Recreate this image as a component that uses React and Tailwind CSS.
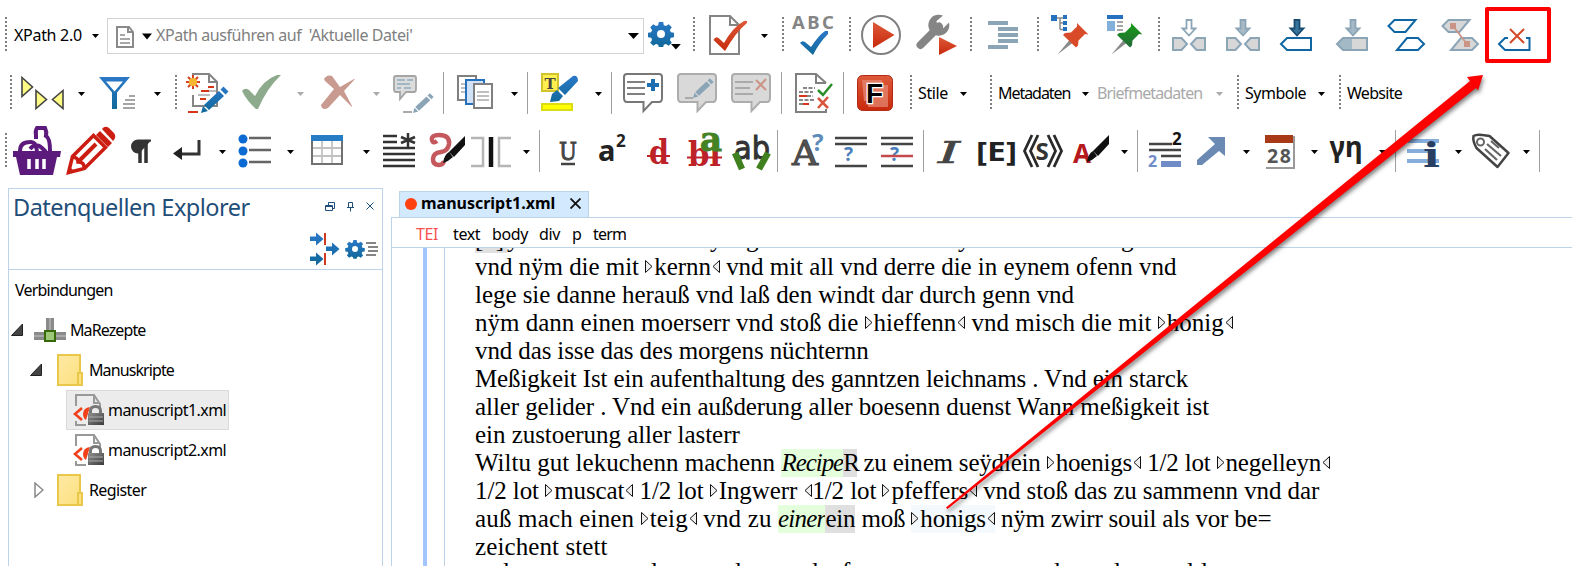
import React from 'react';

const Cell = ({ a, b, y, h, children }) => (
  <svg className="shrink-0 overflow-visible" width={b - a} height={h} viewBox={`${a} ${y} ${b - a} ${h}`} fill="none">
    {children}
  </svg>
);
const R1 = (p) => <Cell y={6} h={60} {...p} />;
const R2 = (p) => <Cell y={66} h={56} {...p} />;
const R3 = (p) => <Cell y={122} h={60} {...p} />;

const Grip = ({ x, y }) => <path d={`M${x} ${y}v34`} stroke="#7f7f7f" strokeWidth="2" strokeDasharray="2 2" />;
const Sep = ({ x, y }) => <path d={`M${x} ${y}v42`} stroke="#a0a0a0" strokeWidth="1" />;
const Caret = ({ x, y, c = '#000', s = 1 }) => <path d={`M${x} ${y}h${7 * s}l${-3.5 * s} ${4 * s}z`} fill={c} />;
const SANS = 'Noto Sans, Open Sans, sans-serif';

const Defs = () => (
  <svg width="0" height="0" className="absolute">
    <defs>
      <linearGradient id="blue" x1="0" y1="0" x2="0" y2="1"><stop offset="0" stopColor="#2b78c8" /><stop offset="1" stopColor="#10699a" /></linearGradient>
      <linearGradient id="red" x1="0" y1="0" x2="0" y2="1"><stop offset="0" stopColor="#dd5a3a" /><stop offset="1" stopColor="#c8290c" /></linearGradient>
      <linearGradient id="green" x1="0" y1="0" x2="0" y2="1"><stop offset="0" stopColor="#159a12" /><stop offset="1" stopColor="#256a3c" /></linearGradient>
      <linearGradient id="folder" x1="0" y1="0" x2="1" y2="1"><stop offset="0" stopColor="#ffeaa6" /><stop offset="1" stopColor="#fbdf7c" /></linearGradient>
      <linearGradient id="lock" x1="0" y1="0" x2="1" y2="1"><stop offset="0" stopColor="#909090" /><stop offset="1" stopColor="#3a3a3a" /></linearGradient>
    </defs>
  </svg>
);

const Gear = ({ cx, cy, r }) => (
  <g fill="url(#blue)">
    <path
      fillRule="evenodd"
      transform={`translate(${cx} ${cy}) scale(${r / 12})`}
      d="M-2.200-12h4.400l.6 3.200 2.200.9 2.700-1.900 3.100 3.100-1.900 2.700.9 2.200 3.200.6v4.400l-3.200.6-.9 2.200 1.900 2.700-3.100 3.100-2.700-1.900-2.200.9-.6 2.200h-4.400l-.6-2.200-2.200-.9-2.700 1.900-3.100-3.100 1.900-2.700-.9-2.200-3.200-.6v-4.400l3.200-.6.9-2.200-1.900-2.700 3.100-3.100 2.700 1.900 2.200-.9zM0-4a4 4 0 1 0 0 8 4 4 0 0 0 0-8z"
    />
  </g>
);

const Pin = ({ dx, fill }) => (
  <g transform={`translate(${dx} 0)`}>
    <path d="M1057.500 54.500l12-14.500 3 3z" fill="#8a8a8a" />
    <path d="M1077 23l11.500 11.500-3.500-.5-6.500 6.500-.5 5-2 2-13-12.500 2-2 6-.5 6-6z" fill={fill} />
  </g>
);

const DownArrow = ({ x, fill, stroke }) => (
  <path d={`M${x - 2.500} 20h5v8.500h4l-6.500 7-6.500-7h4z`} fill={fill} stroke={stroke} strokeWidth="1.800" />
);
const TagPair = ({ x, fill }) => (
  <g stroke="#8ba5b7" strokeWidth="2">
    <path d={`M${x - 16} 38h8.500l5.500 6-5.500 6h-8.500zM${x + 16} 38h-8.500l-5.500 6 5.500 6h8.500z`} fill="#d7d7d7" />
    <DownArrow x={x} fill={fill} stroke="#8ba5b7" />
  </g>
);

const Bubble = ({ x, fill, stroke, children }) => (
  <g>
    <path d={`M${x + 4} 74h32q3 0 3 3v21q0 4-3 4h-7l-8.500 9v-9h-16.500q-3 0-3-4v-21q0-3 3-3z`} fill={fill} stroke={stroke} strokeWidth="2" />
    {children}
  </g>
);

const Pencil = ({ x, y, s = 1, c = 'url(#blue)' }) => (
  <g transform={`translate(${x} ${y}) scale(${s})`} fill={c}>
    <path d="M0 0l2-7 5 5zM3-8L18-22l5 5L8-3zM19.500-23.500l3-3 5 5-3 3z" />
  </g>
);

const Brush = ({ x, y }) => (
  <g transform={`translate(${x} ${y})`} fill="#111">
    <path d="M0 0q1-8 6-11l4 5q-4 4-10 6zM6-11L22-27v9L11-6z" />
  </g>
);

function ToolbarOne() {
  return (
    <div className="flex h-[60px] items-center">
      <R1 a={0} b={14}><Grip x={6} y={17} /></R1>
      <div className="-mt-[2px] w-[76px] shrink-0 whitespace-nowrap text-[16px] tracking-[-0.3px]">XPath 2.0</div>
      <R1 a={90} b={107}><Caret x={92} y={34} /></R1>
      <div className="flex h-[36px] w-[537px] shrink-0 items-center border border-[#d2d2d2]">
        <svg width="48" height="34" viewBox="108 18 48 34" fill="none">
          <path d="M117 26h12l4 5v15h-16zM128 26v5h5" stroke="#8a8a8a" strokeWidth="2" />
          <path d="M120 34h5M120 38h10M120 42h10" stroke="#8a8a8a" strokeWidth="1.500" />
          <path d="M142 32.500h10l-5 6z" fill="#000" />
        </svg>
        <span className="-mt-[2px] grow whitespace-pre text-[16px] tracking-[-0.43px] text-[#808080]">XPath ausführen auf  'Aktuelle Datei'</span>
        <svg width="16" height="34" viewBox="627 18 16 34"><path d="M628 32h11l-5.500 6z" /></svg>
      </div>
      <R1 a={644} b={708}><Gear cx={661} cy={34} r={12} /><Caret x={671} y={44} s={1.4} /><Grip x={694} y={17} /></R1>
      <R1 a={708} b={756}>
        <path d="M710 16h20l9 9v29h-29zM730 16v9h9" stroke="#858585" strokeWidth="2" />
        <path d="M713.500 40q2-4 5-2l5.500 5q9-16 20-22 4-1 3 2-11 9-22 28z" fill="url(#red)" />
      </R1>
      <R1 a={756} b={788}><Caret x={761} y={34} /><Grip x={783} y={17} /></R1>
      <R1 a={788} b={856}>
        <text x="792" y="29" fontFamily={SANS} fontWeight="700" fontSize="18.500" textLength="42" fill="#858585">ABC</text>
        <path d="M800 43q2-3 5-1l6 5q8-12 14-16h3v3q-9 9-15 21z" fill="url(#blue)" />
        <Grip x={850} y={17} />
      </R1>
      <R1 a={856} b={908}>
        <circle cx="881" cy="35" r="19" stroke="#808080" strokeWidth="2" />
        <path d="M873 22l21.500 13-21.500 13z" fill="url(#red)" />
      </R1>
      <R1 a={908} b={980}>
        <path d="M920.500 45L939 26.500" stroke="#858585" strokeWidth="8" strokeLinecap="round" />
        <path d="M943 15.500a10.500 10.500 0 1 0 6 7l-5.500 5.500-6-1.500-1-5.500z" fill="#858585" />
        <path d="M939 37l18 9-18 9z" fill="url(#red)" />
        <Grip x={971} y={17} />
      </R1>
      <R1 a={980} b={1044}>
        <path d="M988 23h20M998 29h20M998 35h20M998 41h20M988 47h20" stroke="#8ba5b7" strokeWidth="4" />
        <Grip x={1038} y={17} />
      </R1>
      <R1 a={1044} b={1100}>
        <path d="M1051 15h6v6h-6zM1063 15h4v4h-4zM1063 21h4v4h-4zM1063 27h4v4h-4z" fill="#2571bd" />
        <path d="M1057 18h6M1060 18v11.500M1060 23h3M1060 29.500h3" stroke="#8a8a8a" strokeWidth="1.500" />
        <Pin dx={0} fill="#d84a28" />
      </R1>
      <R1 a={1100} b={1166}>
        <path d="M1107 15h16v4h-16z" fill="#2571bd" />
        <path d="M1107 21h8v10h-8z" fill="#82b0da" />
        <path d="M1117 22h6M1117 26h6M1117 30h6" stroke="#888" strokeWidth="1.500" />
        <Pin dx={54} fill="url(#green)" />
        <Grip x={1159} y={17} />
      </R1>
      <R1 a={1166} b={1216}><TagPair x={1189} fill="#fff" /></R1>
      <R1 a={1216} b={1270}><TagPair x={1243} fill="#a9bac6" /></R1>
      <R1 a={1270} b={1324}>
        <path d="M1281 44l6-6h24v12h-24z" stroke="#0f66a3" strokeWidth="2" />
        <DownArrow x={1297} fill="#36749b" stroke="#1a4b70" />
      </R1>
      <R1 a={1324} b={1378}>
        <path d="M1337 44l6-6h24v12h-24z" fill="#d7d7d7" />
        <path d="M1337 44l6-6h9v12h-9z" fill="#a3b9c6" />
        <path d="M1337 44l6-6h24v12h-24z" stroke="#8ba5b7" strokeWidth="2" />
        <DownArrow x={1353} fill="#a3b9c6" stroke="#8ba5b7" />
      </R1>
      <R1 a={1378} b={1432}>
        <path d="M1388.500 26l6-6h21l-10 12h-11zM1424 44l-6-6h-11l-10 12h21z" stroke="#0f66a3" strokeWidth="2" />
      </R1>
      <R1 a={1432} b={1485}>
        <path d="M1442.500 26l6-6h21l-10 12h-11zM1478 44l-6-6h-11l-10 12h21z" fill="#d7d7d7" stroke="#8ba5b7" strokeWidth="2" />
        <path d="M1450 23h6v6h-6zM1464 41h6v6h-6z" fill="#cb9486" />
        <path d="M1453 26l14 18" stroke="#cb9486" strokeWidth="1.800" />
      </R1>
      <div className="-mt-[2px] flex h-[56px] w-[66px] shrink-0 items-center justify-center rounded-[2px] border-4 border-[#fe0000]">
        <svg width="58" height="48" viewBox="1489 11 58 48" fill="none">
          <path d="M1508 38h-3l-6 6 6 6h24.500v-12h-3.500" stroke="#0f66a3" strokeWidth="2" />
          <path d="M1510 29l14 14M1524 29l-14 14" stroke="#d54828" strokeWidth="2" />
        </svg>
      </div>
    </div>
  );
}

const Label = ({ className, children }) => (
  <div className={'-mt-[2px] shrink-0 whitespace-nowrap text-[16px] leading-[22px] ' + className}>{children}</div>
);

function ToolbarTwo() {
  return (
    <div className="flex h-[56px] items-center">
      <R2 a={0} b={74}>
        <Grip x={11} y={75} />
        <path d="M22 77.500l10.500 9.500-10.500 9.500zM36 90.500l10.500 9-10.500 9zM63 90.500l-10.500 9 10.500 9z" fill="#fdfb84" stroke="#444" strokeWidth="1.600" />
      </R2>
      <R2 a={74} b={94}><Caret x={78} y={92} /></R2>
      <R2 a={94} b={180}>
        <path fillRule="evenodd" d="M99 77h31l-13 15.500V109h-5V92.500zM106 81.500l8.500 10 8.500-10z" fill="url(#blue)" />
        <path d="M129 96h6M125 100h10M123 104h12M123 108h12" stroke="#888" strokeWidth="1.500" />
        <Caret x={154} y={92} />
        <Grip x={176} y={75} />
      </R2>
      <R2 a={180} b={236}>
        <path d="M193 86V74h16l8 8v24h-24v-11M209 74v8h8" stroke="#858585" strokeWidth="2" />
        <path d="M201 91h8M208 87h6M200 99h6M188 112h10" stroke="#d33516" strokeWidth="2" />
        <path d="M209 91h7M198 95h12" stroke="#bbb" strokeWidth="2" />
        <path d="M193 75v14M186 82h14M188 77l10 10M198 77l-10 10" stroke="#d8401e" strokeWidth="2" />
        <circle cx="193" cy="82" r="4" fill="#f9b731" />
        <Pencil x={201} y={113} />
      </R2>
      <R2 a={236} b={312}>
        <path d="M242 91q3-4 7-1l6 6q8-16 22-21h4q-14 13-23 34h-2q-9-8-14-18z" fill="#8eaa8c" />
        <Caret x={297} y={92} c="#aaa" />
      </R2>
      <R2 a={312} b={386}>
        <path d="M324 79q3-5 8-3l8 11 14-8h1l-11 12 8 15v1l-12-12-12 13q-6 3-7-3l13-16-9-8z" fill="#c99a90" />
        <Caret x={373} y={92} c="#aaa" />
      </R2>
      <R2 a={386} b={448}>
        <path d="M396 76h18q2 0 2 2v11q0 3-2 3h-8l-6 7v-7h-4q-2 0-2-3v-11q0-2 2-2z" fill="#dcdcdc" stroke="#a5a5a5" strokeWidth="1.800" />
        <path d="M397 80h8M407 80h6M397 84h13M397 88h4M404 88h7" stroke="#8eaabd" strokeWidth="1.500" />
        <path d="M403 112h9" stroke="#aaa" strokeWidth="2" />
        <Pencil x={413} y={113} s={0.75} c="#8ba5b7" />
        <Sep x={443.5} y={72} />
      </R2>
      <R2 a={448} b={532}>
        <path d="M458 76h18v24h-18z" fill="#fff" stroke="#808080" strokeWidth="2" />
        <path d="M466 80h18v24h-18z" fill="#cfe2f7" stroke="#2571bd" strokeWidth="2" />
        <path d="M474 84h18v24h-18z" fill="#fff" stroke="#808080" strokeWidth="2" />
        <path d="M461 84h4M461 88h4M461 92h4M477 92h12M477 96h12M477 100h12" stroke="#aaa" strokeWidth="1.500" />
        <Caret x={511} y={92} />
        <Sep x={527.5} y={72} />
      </R2>
      <R2 a={532} b={616}>
        <path d="M542 74h16v17h-16z" fill="#fff04f" stroke="#d2c22e" strokeWidth="2" />
        <text x="544.500" y="88.500" fontFamily="DejaVu Serif, serif" fontWeight="700" fontSize="15" fill="#444">T</text>
        <path d="M550 102l2-8 5-4 6 6-4 5zM558 88l15-12q5-1 5 5l-13 14z" fill="url(#blue)" />
        <path d="M542 104h30v6h-30z" fill="#ffff00" stroke="#dcdc15" strokeWidth="2" />
        <Caret x={595} y={92} />
        <Sep x={611.5} y={72} />
      </R2>
      <R2 a={616} b={670}>
        <Bubble x={623} fill="#fff" stroke="#777">
          <path d="M627 82h18M627 88h18M627 94h18" stroke="#808080" strokeWidth="2" />
          <path d="M651 79h4v4h4v4h-4v4h-4v-4h-4v-4h4z" fill="#1d6fb2" />
        </Bubble>
      </R2>
      <R2 a={670} b={724}>
        <Bubble x={677} fill="#d9d9d9" stroke="#adadad">
          <path d="M685 98h8" stroke="#aaa" strokeWidth="2" />
          <Pencil x={693} y={98} s={0.75} c="#8ba5b7" />
        </Bubble>
      </R2>
      <R2 a={724} b={787}>
        <Bubble x={731} fill="#d9d9d9" stroke="#adadad">
          <path d="M735 82h18M735 88h15M735 94h18" stroke="#aaa" strokeWidth="2" />
          <path d="M756 80l10 10M766 79l-10 11" stroke="#cb9486" strokeWidth="2" />
        </Bubble>
        <Sep x={781.5} y={72} />
      </R2>
      <R2 a={787} b={850}>
        <path d="M826 109v3h-30V74h20l10 9M816 74v9h10" stroke="#808080" strokeWidth="2" />
        <path d="M803 88h12M799 92h14M807 96h6M799 100h15M799 104h4" stroke="#888" strokeWidth="2" strokeDasharray="4 1.500" />
        <path d="M799 96h8M803 104h6" stroke="#d8331b" strokeWidth="2" />
        <path d="M818 90l5 5 9-11" stroke="#2c8f2a" strokeWidth="2.500" />
        <path d="M818 98l10 10M828 97l-10 11" stroke="#d9563c" strokeWidth="2.500" />
        <Sep x={843.5} y={72} />
      </R2>
      <R2 a={850} b={918}>
        <rect x="857.500" y="75.500" width="35" height="35" rx="5" fill="url(#red)" stroke="#b22a14" />
        <path d="M862 80h20v5h6v22h-20v-6h-4z" fill="#e58b78" opacity=".7" />
        <text x="866" y="102.500" fontFamily="Liberation Sans, sans-serif" fontWeight="700" fontSize="28" fill="#000" stroke="#fff" strokeWidth="2.500" paintOrder="stroke">F</text>
        <Grip x={911} y={75} />
      </R2>
      <Label className="w-[38px] tracking-[-0.4px]">Stile</Label>
      <R2 a={956} b={998}><Caret x={960} y={92} /><Grip x={991} y={75} /></R2>
      <Label className="w-[80px] tracking-[-1.05px]">Metadaten</Label>
      <R2 a={1078} b={1097}><Caret x={1082} y={92} /></R2>
      <Label className="w-[115px] tracking-[-0.9px] text-[#a9a9a9]">Briefmetadaten</Label>
      <R2 a={1212} b={1245}><Caret x={1216} y={92} c="#aaa" /><Grip x={1238} y={75} /></R2>
      <Label className="w-[67px] tracking-[-0.5px]">Symbole</Label>
      <R2 a={1312} b={1347}><Caret x={1318} y={92} /><Grip x={1340} y={75} /></R2>
      <Label className="w-[80px] tracking-[-0.7px]">Website</Label>
    </div>
  );
}

function ToolbarThree() {
  return (
    <div className="flex h-[60px] items-center">
      <R3 a={0} b={64}>
        <Grip x={6} y={133} />
        <path d="M13 151h48l-1 6h-3l-4 18H20l-4-18h-3z" fill="#5b1a7c" />
        <path d="M20 151q0-9 10-9 6-1 7 9M30 149q6-7 12-1l4 4M36 139v-4q-1-4 1-7h8q2 4 1 8 4 2 4 15" stroke="#5b1a7c" strokeWidth="4" />
        <path d="M29 159v10M37 159v10M44 159v10" stroke="#fff" strokeWidth="3.500" />
      </R3>
      <R3 a={64} b={122}>
        <path d="M68.500 172.500l4-16 21-21 12 12-21 21zM72 157q6 0 6 5 6 0 6 5" stroke="#cc1d12" strokeWidth="3.500" />
        <path d="M79 161l17-17" stroke="#cc1d12" strokeWidth="4" />
        <path d="M67 174l2-8 6 6z" fill="#cc1d12" />
        <path d="M96 135l4-4 12 12-4 4zM102 129q3-4 7-1l5 5q3 4-1 8z" fill="#cc1d12" />
      </R3>
      <R3 a={122} b={164}>
        <path d="M151 140.500h-13a6 6 0 0 0 0 12h2" fill="#333" stroke="#333" strokeWidth="2" />
        <path d="M140 140v23M146 140v23" stroke="#333" strokeWidth="3.500" />
      </R3>
      <R3 a={164} b={230}>
        <path d="M199 140v14h-18" stroke="#333" strokeWidth="3" />
        <path d="M173 153.500l9-6.500v13z" fill="#222" />
        <Caret x={219} y={150} />
      </R3>
      <R3 a={230} b={300}>
        <g fill="#0b6bd2"><circle cx="243" cy="139" r="4.500" /><circle cx="243" cy="151" r="4.500" /><circle cx="243" cy="163" r="4.500" /></g>
        <path d="M249 138h22M249 150h22M249 162h22" stroke="#666" strokeWidth="2.500" />
        <Caret x={287} y={150} />
      </R3>
      <R3 a={300} b={376}>
        <path d="M313 148h29M313 156h29M322 141v23M332 141v23" stroke="#c2c2c2" strokeWidth="1.800" />
        <path d="M312 141v23h30v-23" stroke="#707070" strokeWidth="2" />
        <path d="M311 135h32v6h-32z" fill="#267cc5" />
        <Caret x={363} y={150} />
      </R3>
      <R3 a={376} b={422}>
        <path d="M383 136h14M383 142h14M383 148h32M383 154h32M383 160h32M383 166h32" stroke="#333" strokeWidth="2.500" />
        <path d="M408 133v14M401 137l14 6M415 137l-14 6" stroke="#333" strokeWidth="2.500" />
      </R3>
      <R3 a={422} b={468}>
        <path d="M437 141q-4 3-5-1-1-5 7-5 11 0 10 9-1 7-8 8-8 1-8 7 0 6 6 6 4 0 5-4" stroke="#c4585c" strokeWidth="4.500" />
        <Brush x={443} y={163} />
      </R3>
      <R3 a={468} b={548}>
        <path d="M471 138h12v28h-12M511 138h-12v28h12" stroke="#b5b5b5" strokeWidth="2.500" />
        <path d="M491 137v30" stroke="#111" strokeWidth="4.500" />
        <Caret x={523} y={150} />
        <Sep x={539.5} y={130} />
      </R3>
      <R3 a={548} b={588}>
        <text x="559" y="160" fontFamily="DejaVu Serif, serif" fontSize="25" textLength="18" lengthAdjust="spacingAndGlyphs" fill="#444" stroke="#444" strokeWidth="1">U</text>
        <path d="M561 164h14" stroke="#444" strokeWidth="2.500" />
      </R3>
      <R3 a={588} b={640}>
        <text x="598" y="161" fontFamily={SANS} fontWeight="700" fontSize="29" fill="#222">a</text>
        <text x="616" y="147" fontFamily={SANS} fontWeight="700" fontSize="17" fill="#222">2</text>
      </R3>
      <R3 a={640} b={680}>
        <text x="649" y="164" fontFamily="DejaVu Serif, serif" fontWeight="700" fontSize="33" textLength="20" lengthAdjust="spacingAndGlyphs" fill="#bd2228">d</text>
        <path d="M647 156h23" stroke="#bd2228" strokeWidth="2" />
      </R3>
      <R3 a={680} b={726}>
        <text x="688" y="166" fontFamily="DejaVu Serif, serif" fontWeight="700" fontSize="34" textLength="33" lengthAdjust="spacingAndGlyphs" fill="#bd2228">bl</text>
        <path d="M687 157.500h35" stroke="#bd2228" strokeWidth="2" />
        <text x="700" y="151" fontFamily="DejaVu Serif, serif" fontWeight="700" fontSize="34" textLength="22" lengthAdjust="spacingAndGlyphs" fill="#458224" stroke="#458224">a</text>
      </R3>
      <R3 a={726} b={786}>
        <text x="734" y="159" fontFamily="DejaVu Sans, sans-serif" fontSize="32" textLength="36" lengthAdjust="spacingAndGlyphs" fill="#333" stroke="#333" strokeWidth="1">ab</text>
        <path d="M735 153l7 16M768 153l-9 16" stroke="#41801f" strokeWidth="6.500" />
        <Sep x={777.5} y={130} />
      </R3>
      <R3 a={786} b={830}>
        <text x="792" y="165" fontFamily="DejaVu Serif, serif" fontSize="33" textLength="26" lengthAdjust="spacingAndGlyphs" fill="#555" stroke="#444" strokeWidth="1">A</text>
        <text x="812" y="151" fontFamily={SANS} fontWeight="700" fontSize="24" fill="#5d8cba">?</text>
      </R3>
      <R3 a={830} b={874}>
        <path d="M835 138h32M835 144h32M835 166h32" stroke="#444" strokeWidth="2.500" />
        <text x="844" y="161" fontFamily={SANS} fontWeight="700" fontSize="19" fill="#4b80bb">?</text>
      </R3>
      <R3 a={874} b={932}>
        <path d="M881 138h32M881 144h32M881 166h32" stroke="#444" strokeWidth="2.500" />
        <text x="890" y="161" fontFamily={SANS} fontWeight="700" fontSize="19" fill="#4b80bb">?</text>
        <path d="M881 156h32" stroke="#c4494e" strokeWidth="2.500" />
        <Sep x={923.5} y={130} />
      </R3>
      <R3 a={932} b={972}>
        <text x="938" y="163" fontFamily="DejaVu Serif, serif" fontStyle="italic" fontSize="29" textLength="22" lengthAdjust="spacingAndGlyphs" fill="#444" stroke="#444" strokeWidth=".6">I</text>
      </R3>
      <R3 a={972} b={1020}>
        <text x="976" y="160.500" fontFamily={SANS} fontWeight="700" fontSize="26" textLength="41" lengthAdjust="spacingAndGlyphs" fill="#222">[E]</text>
      </R3>
      <R3 a={1020} b={1068}>
        <path d="M1032 135l-7.500 16 7.500 16M1038 135l-7.500 16 7.500 16M1054 135l7.500 16-7.500 16M1048 135l7.500 16-7.500 16" stroke="#2a2a2a" strokeWidth="2.800" />
        <text x="1035.500" y="160" fontFamily={SANS} fontWeight="700" fontSize="24" fill="#333">S</text>
      </R3>
      <R3 a={1068} b={1144}>
        <text x="1073" y="162.500" fontFamily={SANS} fontWeight="700" fontSize="26" fill="#b5191d">A</text>
        <Brush x={1087} y={162} />
        <Caret x={1121} y={150} />
        <Sep x={1137.5} y={130} />
      </R3>
      <R3 a={1144} b={1190}>
        <path d="M1149 144h23M1149 150h32M1161 156h20" stroke="#444" strokeWidth="2.300" />
        <path d="M1161 164h20" stroke="#6f8cc6" strokeWidth="6" />
        <text x="1172" y="145" fontFamily={SANS} fontWeight="700" fontSize="17" fill="#111">2</text>
        <text x="1148" y="167" fontFamily={SANS} fontWeight="700" fontSize="16" fill="#6f8cc6">2</text>
      </R3>
      <R3 a={1190} b={1256}>
        <path d="M1225 137v19l-6-5-17 14h-5v-5l18-16-7-7z" fill="#6a8ab4" />
        <Caret x={1243} y={150} />
      </R3>
      <R3 a={1256} b={1324}>
        <path d="M1266 168h28v-32" stroke="#999" strokeWidth="2" />
        <path d="M1265 143h28v24h-28z" fill="#fff" />
        <path d="M1265 135h28v8h-28z" fill="#a93a18" />
        <text x="1267" y="163" fontFamily={SANS} fontWeight="700" fontSize="19.500" textLength="24" fill="#555">28</text>
        <Caret x={1311} y={150} />
      </R3>
      <R3 a={1324} b={1400}>
        <text x="1329.500" y="157" fontFamily={SANS} fontWeight="700" fontSize="29" textLength="33" lengthAdjust="spacingAndGlyphs" fill="#222">γη</text>
        <Caret x={1379} y={150} />
        <Sep x={1395.5} y={130} />
      </R3>
      <R3 a={1400} b={1466}>
        <path d="M1408 141h31M1407 151h27M1407 161h32" stroke="#86aedd" strokeWidth="4" />
        <text x="1423" y="167" fontFamily="DejaVu Serif, serif" fontWeight="700" fontSize="34" textLength="17" lengthAdjust="spacingAndGlyphs" fill="#283f63">i</text>
        <Caret x={1455} y={150} />
      </R3>
      <R3 a={1466} b={1546}>
        <path d="M1473.500 136q3-2 9-1l7 1 19 17-11 14-21-19q-4-7-3-12z" stroke="#444" strokeWidth="2.500" strokeLinejoin="round" />
        <circle cx="1480.500" cy="142" r="3.500" stroke="#666" strokeWidth="2" />
        <path d="M1487 144l14 12M1485 149l12 11M1491 141l8 7" stroke="#666" strokeWidth="2.200" />
        <Caret x={1523} y={150} />
        <Sep x={1539.5} y={130} />
      </R3>
    </div>
  );
}

const Folder = () => (
  <svg width="26" height="32" viewBox="0 0 26 32" className="shrink-0">
    <path d="M1 1h22v18h2v12H1z" fill="url(#folder)" stroke="#e9c748" strokeWidth="2" />
    <path d="M21 31V19h3" fill="none" stroke="#e9c748" strokeWidth="2" />
  </svg>
);
const FileIcon = () => (
  <svg width="31" height="32" viewBox="73 394 31 32" fill="none" className="shrink-0">
    <path d="M76 406v-11h18l6 9v6M94 395v8h6M76 421v4h10" stroke="#999" strokeWidth="2" />
    <path d="M82 408l-7 6 7 6" stroke="#f2401a" strokeWidth="2.600" />
    <path d="M90 407q-7 1-7 7 0 4 3 6z" fill="#f2401a" />
    <path d="M90.500 414v-3q0-4.500 5-4.500t5 4.500v3" stroke="#777" strokeWidth="3" />
    <path d="M88 413h16v12H88z" fill="url(#lock)" />
    <path d="M89 417h14M89 421h14" stroke="#aaa" strokeWidth="1" />
  </svg>
);
const Open = () => <svg width="12" height="12" viewBox="0 0 12 12" className="shrink-0"><path d="M.5 11.500h11V0z" fill="#444" stroke="#222" /></svg>;

function Explorer() {
  return (
    <aside className="flex w-[375px] shrink-0 flex-col border border-b-0 border-[#bcd3ea] text-[16px]">
      <header className="flex h-[81px] flex-col border-b border-[#bcd3ea]">
        <div className="flex h-[38px] justify-between pl-[4px] pr-[8px]">
          <h1 className="whitespace-nowrap text-[23.500px] leading-[37px] tracking-[-0.5px] text-[#1f4e79]">Datenquellen Explorer</h1>
          <svg width="50" height="38" viewBox="324 189 50 38" fill="none" stroke="#1f4e79">
            <path d="M325.500 205.500h7v5h-7zM325.500 206.500h7M328.500 205v-2.500h6v6h-2" />
            <path d="M348.500 202.500h4v5h-4zM347 207.500h7M350.500 208v3.500" />
            <path d="M366.500 202.500l7 7M373.500 202.500l-7 7" />
          </svg>
        </div>
        <div className="flex justify-end pr-[3px] pt-[1px]">
          <svg width="70" height="40" viewBox="309 228 70 40" fill="none">
            <g fill="url(#blue)">
              <path d="M310 236.500h6v-4l7.500 6.500-7.500 6.500v-4.500h-6zM310 256.500h6v-4l7.500 6.500-7.500 6.500v-4.500h-6zM326 246.500h6v-4l7.500 6.500-7.500 6.500v-4.500h-6z" />
            </g>
            <path d="M325 233v12M325 253v12" stroke="#d23a20" strokeWidth="2" />
            <Gear cx={355} cy={249} r={9} />
            <path d="M366 243h10M368 247h10M368 251h10M366 255h10" stroke="#858585" strokeWidth="2" />
          </svg>
        </div>
      </header>
      <div className="flex h-[40px] items-center pl-[6px] tracking-[-0.8px]">Verbindungen</div>
      <div className="flex h-[40px] items-center pl-[2px] tracking-[-0.9px]">
        <Open />
        <svg width="32" height="24" viewBox="34 320 32 24" className="ml-[11px] shrink-0">
          <path d="M34 334h32v8H34zM46 320h8v14h-8z" fill="#8a8a8a" />
          <path d="M34 337h32v2H34zM49 320h2v14h-2z" fill="#a9a9a9" />
          <path d="M45 333h10v10H45z" fill="#9cc878" stroke="#376a08" strokeWidth="2" />
        </svg>
        <span className="ml-[4px]">MaRezepte</span>
      </div>
      <div className="flex h-[40px] items-center pl-[21px] tracking-[-0.9px]"><Open /><span className="ml-[15px]"><Folder /></span><span className="ml-[6px]">Manuskripte</span></div>
      <div className="flex h-[40px] items-center pl-[57px] tracking-[-0.55px]">
        <div className="flex h-[40px] w-[163px] items-center border border-[#dadada] bg-[#ececec] pl-[6px]"><FileIcon /><span className="ml-[4px]">manuscript1.xml</span></div>
      </div>
      <div className="flex h-[40px] items-center pl-[64px] tracking-[-0.55px]"><FileIcon /><span className="ml-[4px]">manuscript2.xml</span></div>
      <div className="flex h-[40px] items-center pl-[25px] tracking-[-0.6px]">
        <svg width="10" height="16" viewBox="0 0 10 16" className="shrink-0"><path d="M1 1l8 7-8 7z" fill="#fff" stroke="#888" strokeWidth="1.500" /></svg>
        <span className="ml-[13px]"><Folder /></span><span className="ml-[6px]">Register</span>
      </div>
    </aside>
  );
}

const O = () => <svg width="9" height="15" viewBox="0 0 9 15" className="inline-block align-baseline"><path d="M.5 .5l6.500 6-6.500 6z" fill="#eee" stroke="#111" /></svg>;
const C = () => <svg width="9" height="15" viewBox="0 0 9 15" className="inline-block align-baseline"><path d="M8.500 .5l-6.500 6 6.500 6z" fill="#eee" stroke="#111" /></svg>;
const Ln = ({ className = '', children }) => <div className={'h-[28px] whitespace-pre ' + className}>{children}</div>;
const G = ({ className, children }) => <span className={'inline-block ' + className}>{children}</span>;

function Editor() {
  return (
    <main className="flex min-w-0 grow flex-col">
      <div className="flex h-[29px] items-end pl-[8px]">
        <div className="flex h-[26px] w-[190px] items-center border border-b-0 border-[#bcd3ea] bg-[#d2e9fe] pl-[5px] text-[16px] font-bold tracking-[-0.02px]">
          <span className="-mt-[2px] mr-[4px] h-[12px] w-[12px] rounded-full bg-[#ff4010]" />
          <span className="-mt-[4px] w-[149px]">manuscript1.xml</span>
          <svg width="11" height="11" viewBox="0 0 11 11" className="-mt-[2px] shrink-0"><path d="M.5 .5l10 10M10.500 .5l-10 10" stroke="#111" strokeWidth="1.800" /></svg>
        </div>
      </div>
      <div className="flex h-[31px] items-center border-y border-l border-[#bcd3ea] pl-[24px] pt-[2px] text-[16px] tracking-[-0.4px]">
        <span className="w-[37px] text-[#fb5050]">TEI</span>
        <span className="w-[39px]">text</span>
        <span className="w-[47px]">body</span>
        <span className="w-[33px]">div</span>
        <span className="w-[21px]">p</span>
        <span className="tracking-[-0.8px]">term</span>
      </div>
      <div className="flex grow overflow-hidden border-l border-[#bcd3ea]">
        <div className="ml-[31px] w-[4px] shrink-0 bg-[#a2c6fb]" />
        <div className="ml-[17px] w-px shrink-0 bg-[#bcd3ea]" />
        <article className="-mt-[23px] ml-[30px] h-[341px] overflow-hidden font-['Liberation_Serif',serif] text-[25px] leading-[28px] text-black">
          <Ln><G className="w-[32px] bg-[#e0e0e0]">[..]</G><G className="w-[203px]">y</G><G className="w-[36px]">y</G><G className="w-[212px]">g</G><G className="w-[163px]">y</G>g</Ln>
          <Ln className="tracking-[-0.04px]">vnd nÿm die mit <O />kernn<C /> vnd mit all vnd derre die in eynem ofenn vnd</Ln>
          <Ln className="tracking-[-0.05px]">lege sie danne herauß vnd laß den windt dar durch genn vnd</Ln>
          <Ln>nÿm dann einen moerserr vnd stoß die <O />hieffenn<C /> vnd misch die mit <O />honig<C /></Ln>
          <Ln className="tracking-[-0.12px]">vnd das isse das des morgens nüchternn</Ln>
          <Ln className="tracking-[-0.13px]">Meßigkeit Ist ein aufenthaltung des ganntzen leichnams . Vnd ein starck</Ln>
          <Ln className="tracking-[-0.08px]">aller gelider . Vnd ein außderung aller boesenn duenst Wann meßigkeit ist</Ln>
          <Ln className="tracking-[-0.04px]">ein zustoerung aller lasterr</Ln>
          <Ln className="tracking-[-0.19px]"><span className="tracking-[0.02px]">Wiltu gut lekuchenn machenn </span><G className="bg-[#e4ffdc] italic tracking-[-1.05px]">Recipe</G><G className="bg-[#dfdfdf] tracking-[-2.5px]">R</G> zu einem seÿdlein <O />hoenigs<C /> 1/2 lot <O />negelleyn<C /></Ln>
          <Ln className="tracking-[-0.09px]">1/2 lot <O />muscat<C /> 1/2 lot <O />Ingwerr <C />1/2 lot <O />pfeffers<C /> vnd stoß das zu sammenn vnd dar</Ln>
          <Ln className="tracking-[-0.2px]"><span className="tracking-[0.17px]">auß mach einen <O />teig<C /> vnd zu </span><G className="bg-[#e4ffdc] italic tracking-[-0.8px]">einer</G><G className="bg-[#dfdfdf]">ein</G> moß <G className="bg-[#f3f9fd]"><O />honigs<C /></G> nÿm zwirr souil als vor be=</Ln>
          <Ln className="tracking-[0.1px]">zeichent stett</Ln>
          <Ln className="-mt-[3px] pl-[28px]"><G className="w-[148px]">l</G><G className="w-[84px]">l</G><G className="w-[77px]">l</G><G className="w-[30px]">l</G><G className="w-[212px]">f</G><G className="w-[60px]">l</G><G className="w-[73px]">l</G><G className="w-[14px]">l</G>l</Ln>
        </article>
      </div>
    </main>
  );
}

export default function App() {
  return (
    <div className="relative flex h-[566px] w-[1572px] flex-col overflow-hidden bg-white pt-[6px] font-['Noto_Sans','Open_Sans',sans-serif] text-black">
      <Defs />
      <ToolbarOne />
      <ToolbarTwo />
      <ToolbarThree />
      <div className="flex grow gap-[8px] pl-[8px] pt-[6px]">
        <Explorer />
        <Editor />
      </div>
      <svg width="1572" height="566" viewBox="0 0 1572 566" className="pointer-events-none absolute left-0 top-0 drop-shadow-[1px_3px_2px_rgba(0,0,0,0.5)]">
        <path d="M946 507.500L1470 81 1467 77 1483 75 1478 90.500 1476 88 947.500 509z" fill="#fe0000" />
      </svg>
    </div>
  );
}
